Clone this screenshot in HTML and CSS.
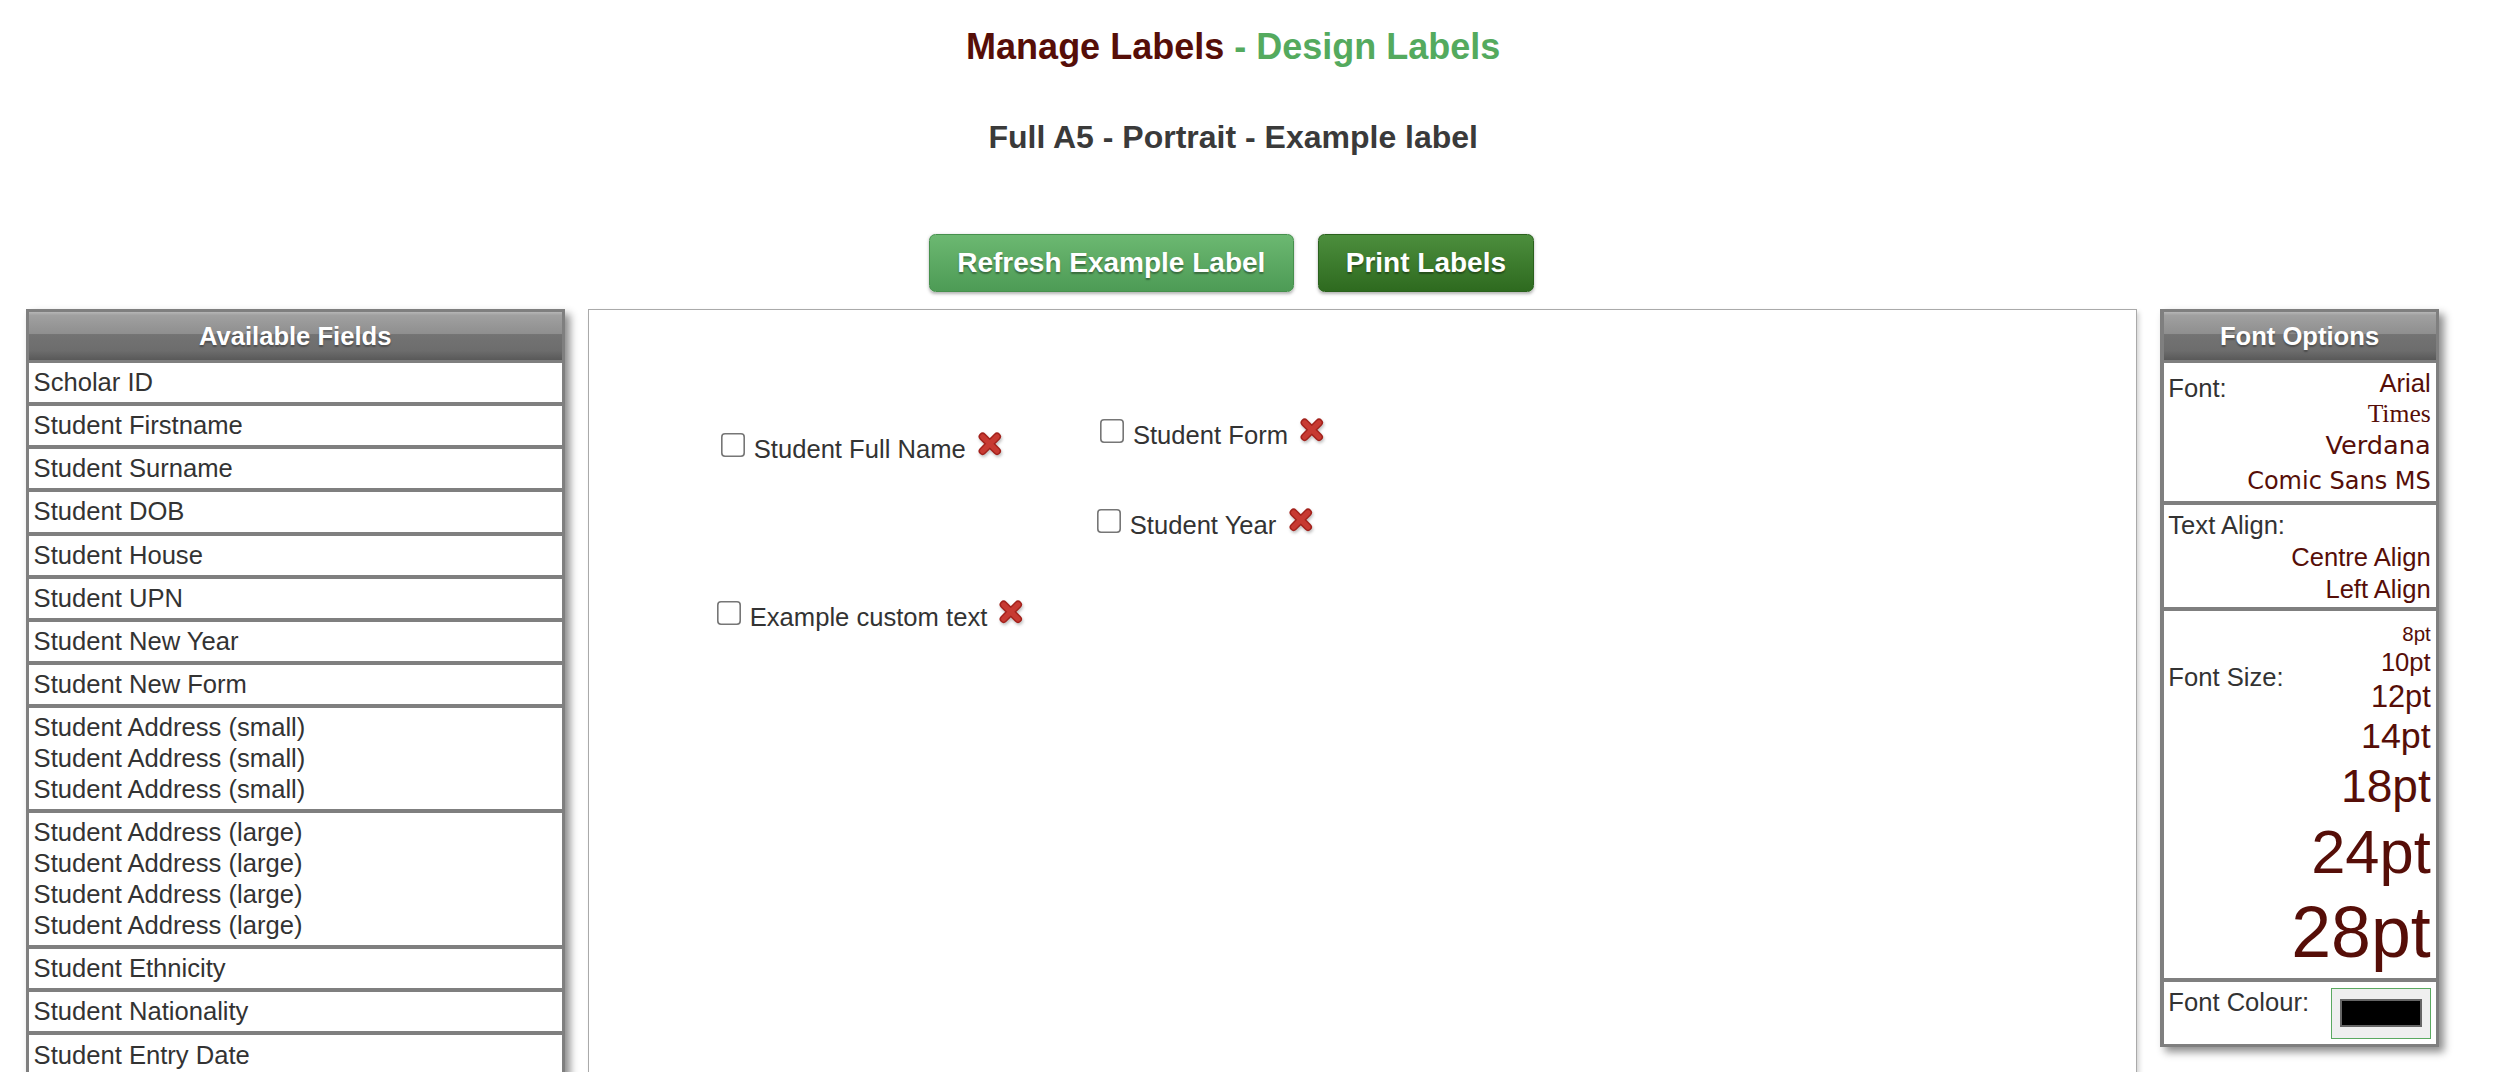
FILE: index.html
```html
<!DOCTYPE html>
<html lang="en">

<head>
    <meta charset="UTF-8">
    <meta name="viewport" content="width=device-width, initial-scale=1.0">
    <title>Design Labels</title>
    <link rel="stylesheet" href="styles.css">
</head>

<body>
    <svg class="icon-defs" aria-hidden="true">
        <symbol id="icon-delete" viewBox="0 0 16 16">
            <path d="M3.5 3.5 L12.5 12.5 M12.5 3.5 L3.5 12.5" stroke="#a3221c" stroke-width="5" stroke-linecap="round" fill="none" />
            <path d="M3.5 3.5 L12.5 12.5 M12.5 3.5 L3.5 12.5" stroke="#c73a32" stroke-width="3.2" stroke-linecap="round" fill="none" />
        </symbol>
    </svg>

    <div class="page">
        <h1 class="page-title"><span class="crumb">Manage Labels</span> - Design Labels</h1>
        <h2 class="label-name">Full A5 - Portrait - Example label</h2>

        <div class="actions">
            <button type="button" class="btn btn-refresh">Refresh Example Label</button>
            <button type="button" class="btn btn-print">Print Labels</button>
        </div>

        <div class="designer">
            <!-- Available Fields -->
            <div class="panel fields-panel">
                <div class="panel-header">Available Fields</div>
                <ul class="field-list">
                    <li>Scholar ID</li>
                    <li>Student Firstname</li>
                    <li>Student Surname</li>
                    <li>Student DOB</li>
                    <li>Student House</li>
                    <li>Student UPN</li>
                    <li>Student New Year</li>
                    <li>Student New Form</li>
                    <li>Student Address (small)<br>Student Address (small)<br>Student Address (small)</li>
                    <li>Student Address (large)<br>Student Address (large)<br>Student Address (large)<br>Student Address (large)</li>
                    <li>Student Ethnicity</li>
                    <li>Student Nationality</li>
                    <li>Student Entry Date</li>
                </ul>
            </div>

            <!-- Label canvas -->
            <div class="label-canvas">
                <div class="label-item" style="left: 82.5px; top: 76.5px;">
                    <input type="checkbox">
                    <span class="item-text">Student Full Name</span>
                    <svg class="delete-icon"><use href="#icon-delete" /></svg>
                </div>
                <div class="label-item" style="left: 319.5px; top: 68px;">
                    <input type="checkbox">
                    <span class="item-text">Student Form</span>
                    <svg class="delete-icon"><use href="#icon-delete" /></svg>
                </div>
                <div class="label-item" style="left: 317.5px; top: 124.2px;">
                    <input type="checkbox">
                    <span class="item-text">Student Year</span>
                    <svg class="delete-icon"><use href="#icon-delete" /></svg>
                </div>
                <div class="label-item" style="left: 80px; top: 181.5px;">
                    <input type="checkbox">
                    <span class="item-text">Example custom text</span>
                    <svg class="delete-icon"><use href="#icon-delete" /></svg>
                </div>
            </div>

            <!-- Font Options -->
            <div class="panel font-panel">
                <div class="panel-header">Font Options</div>
                <div class="opt-sections">
                    <div class="opt-section">
                        <div class="opt-label font-label">Font:</div>
                        <div class="opt-values">
                            <div class="opt font-arial">Arial</div>
                            <div class="opt font-times">Times</div>
                            <div class="opt font-verdana">Verdana</div>
                            <div class="opt font-comic">Comic Sans MS</div>
                        </div>
                    </div>
                    <div class="opt-section stacked">
                        <div class="opt-label">Text Align:</div>
                        <div class="opt-values">
                            <div class="opt">Centre Align</div>
                            <div class="opt">Left Align</div>
                        </div>
                    </div>
                    <div class="opt-section">
                        <div class="opt-label size-label">Font Size:</div>
                        <div class="opt-values size-list">
                            <div class="size size-8">8pt</div>
                            <div class="size size-10">10pt</div>
                            <div class="size size-12">12pt</div>
                            <div class="size size-14">14pt</div>
                            <div class="size size-18">18pt</div>
                            <div class="size size-24">24pt</div>
                            <div class="size size-28">28pt</div>
                        </div>
                    </div>
                    <div class="opt-section">
                        <div class="opt-label">Font Colour:</div>
                        <div class="opt-values">
                            <input type="color" class="colour-input" value="#000000">
                        </div>
                    </div>
                </div>
            </div>
        </div>
    </div>
</body>

</html>
```

FILE: styles.css
```css
/* General Styles */
html {
    zoom: 1.6;
}

body {
    font-family: 'Liberation Sans', Arial, sans-serif;
    font-size: 16px;
    color: #333;
    background-color: #fff;
    margin: 0;
}

.icon-defs {
    position: absolute;
    width: 0;
    height: 0;
    overflow: hidden;
}

.page {
    margin-right: 21px;
}

.page-title {
    margin: 16px 0 0;
    font-size: 22.5px;
    line-height: 26px;
    text-align: center;
    color: #54aa5e;
}

.page-title .crumb {
    color: #560e08;
}

.label-name {
    margin: 32.5px 0 0;
    font-size: 20px;
    line-height: 23px;
    text-align: center;
    color: #3a3a3a;
}

/* Buttons */
.actions {
    display: flex;
    justify-content: center;
    gap: 15px;
    margin-top: 48.5px;
    padding-right: 2px;
}

.btn {
    font-family: inherit;
    font-size: 17.5px;
    font-weight: bold;
    line-height: 20px;
    color: #fff;
    padding: 7.5px 17px;
    border: 1px solid;
    border-radius: 4px;
    text-shadow: 0 1px 1px rgba(0, 0, 0, 0.35);
    box-shadow: 0 1px 2px rgba(0, 0, 0, 0.3);
    cursor: pointer;
}

.btn-refresh {
    background: linear-gradient(#6cb871, #4d9b55);
    border-color: #46904d;
}

.btn-print {
    background: linear-gradient(#4c8e3d, #2e6a1f);
    border-color: #2a611d;
}

/* Designer layout */
.designer {
    display: flex;
    align-items: flex-start;
    gap: 14.5px;
    margin-top: 11px;
    padding-left: 16px;
}

.panel {
    background-color: #7f7f7f;
    padding: 2px;
    box-shadow: 3px 3px 5px rgba(0, 0, 0, 0.45);
}

.panel-header {
    height: 30px;
    line-height: 30px;
    text-align: center;
    font-weight: bold;
    color: #fff;
    text-shadow: 0 1px 1px rgba(0, 0, 0, 0.3);
    background: linear-gradient(#b6b6b6 0, #a0a0a0 7%, #8f8f8f 45%, #737373 47%, #6d6d6d 80%, #595959 100%);
}

.fields-panel {
    width: 333px;
    flex-shrink: 0;
}

.field-list {
    list-style: none;
    margin: 1.5px 0 0;
    padding: 0;
    display: flex;
    flex-direction: column;
    gap: 2.5px;
}

.field-list li {
    background-color: #fff;
    padding: 2.6px 3px;
    line-height: 19.3px;
}

/* Label canvas */
.label-canvas {
    position: relative;
    width: 967px;
    height: 720px;
    flex-shrink: 0;
    background-color: #fff;
    border: 1px solid #aaa;
    box-shadow: 2px 2px 3px rgba(0, 0, 0, 0.18);
}

.label-item {
    position: absolute;
    display: flex;
    align-items: flex-start;
    white-space: nowrap;
}

.label-item input {
    width: 15.5px;
    height: 15.5px;
    margin: 0;
}

.item-text {
    margin: 1.3px 0 0 5px;
    line-height: 18px;
}

.delete-icon {
    width: 16px;
    height: 16px;
    margin: -1px 0 0 7px;
    filter: drop-shadow(1px 1.5px 1px rgba(0, 0, 0, 0.25));
}

/* Font options */
.font-panel {
    width: 170px;
    flex-shrink: 0;
}

.opt-sections {
    margin-top: 1.5px;
    display: flex;
    flex-direction: column;
    gap: 2.5px;
}

.opt-section {
    background-color: #fff;
    padding: 2.5px 3px 1px;
    display: grid;
    grid-template-columns: auto 1fr;
}

.opt-section.stacked {
    display: block;
}

.opt-label {
    line-height: 20px;
    white-space: nowrap;
}

.font-label {
    margin-top: 3.5px;
}

.size-label {
    padding-top: 29px;
}

.opt-values {
    text-align: right;
    color: #560e08;
}

.opt {
    line-height: 20px;
    white-space: nowrap;
}

.font-times {
    font-family: 'Times New Roman', 'Liberation Serif', serif;
    line-height: 19px;
}

.font-verdana {
    font-family: Verdana, 'DejaVu Sans', sans-serif;
    line-height: 21px;
}

.font-comic {
    font-family: 'Comic Sans MS', 'DejaVu Sans', sans-serif;
    font-size: 15px;
    line-height: 23px;
}

.size-list {
    padding: 4.5px 0 0;
}

.size {
    line-height: 1.215;
}

/* option sizes are shown relative to the 10pt base */
.size-8 { font-size: 0.8em; }
.size-10 { font-size: 1em; }
.size-12 { font-size: 1.2em; }
.size-14 { font-size: 1.4em; }
.size-18 { font-size: 1.8em; }
.size-24 { font-size: 2.4em; }
.size-28 { font-size: 2.8em; }

.colour-input {
    -webkit-appearance: none;
    appearance: none;
    box-sizing: border-box;
    width: 62.5px;
    height: 32px;
    margin: 1px 0 2px;
    padding: 6.5px 5px;
    border: 1px solid #5aa960;
    background-color: #efefef;
    vertical-align: top;
}

.colour-input::-webkit-color-swatch-wrapper {
    padding: 0;
}

.colour-input::-webkit-color-swatch {
    border: 1.8px solid #666;
    border-radius: 0;
}
```
